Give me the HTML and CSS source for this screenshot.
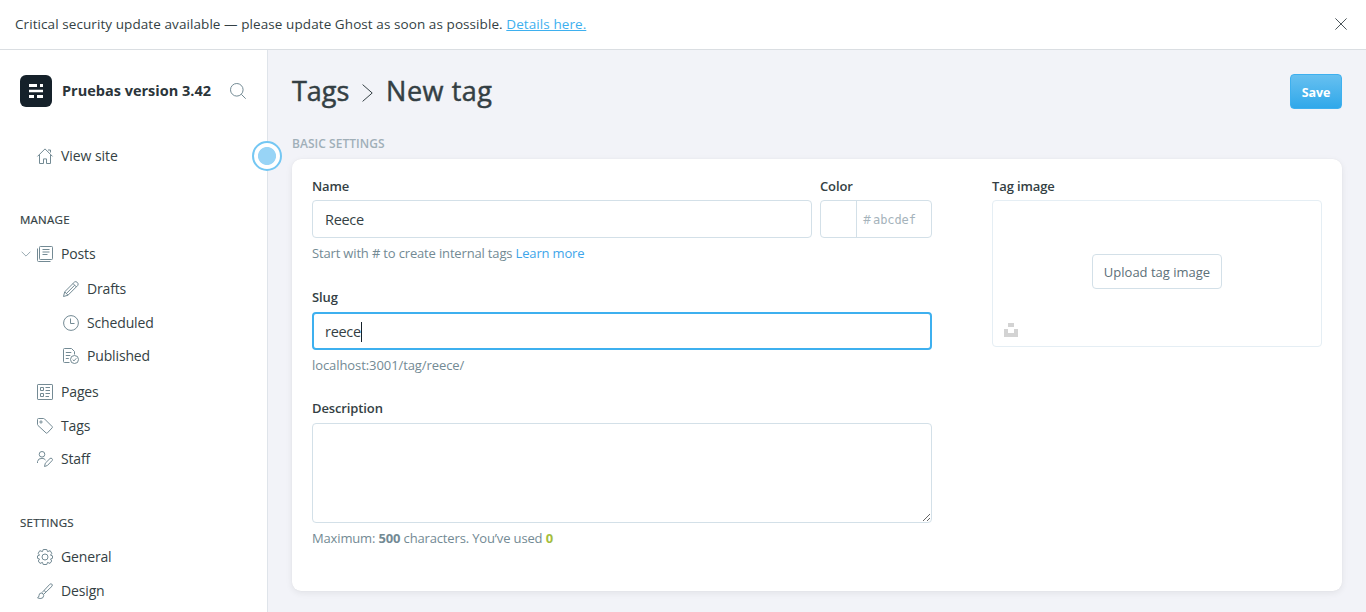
FILE: index.html
```html
<!DOCTYPE html>
<html lang="en">
<head>
<meta charset="utf-8">
<title>New tag</title>
<link rel="stylesheet" href="styles.css">
</head>
<body>
<div class="alert">
  <p class="alert-text">Critical security update available — please update Ghost as soon as possible. <a href="#">Details here.</a></p>
  <svg class="close" viewBox="0 0 12 12"><path d="M.4.4l11.2 11.2M11.6.4L.4 11.6"/></svg>
</div>
<div class="app">
  <nav class="sidebar">
    <header class="brand">
      <svg class="logo" viewBox="0 0 32 32"><rect width="32" height="32" rx="6" fill="#15212a"/><path fill="#fff" d="M9 9h8v3H9zM20 9h3v3h-3zM9 14.700h14v2.600H9zM9 20h5v3H9zM17 20h6v3h-6z"/></svg>
      <span class="brand-name">Pruebas version 3.42</span>
      <svg class="search" viewBox="0 0 16 16"><circle cx="6.800" cy="6.800" r="6.300"/><path d="M11.300 11.300l4.400 4.400"/></svg>
    </header>
    <a class="item view"><svg class="icon" viewBox="0 0 16 16"><path d="M.5 8.400L8 .9l7.500 7.500M2.500 7v8.500h4v-4.600h3v4.600h4V7M11 2h2.500v2.500"/></svg><span>View site</span></a>
    <h2 class="group">MANAGE</h2>
    <a class="item posts"><svg class="chevron" viewBox="0 0 10 6"><path d="M.6.7L5 5.100 9.400.7"/></svg><svg class="icon" viewBox="0 0 16 16"><rect x="2.500" y=".5" width="13" height="13" rx=".8"/><path d="M.5 2.500V14.500q0 1 1 1H13.500M5.500 3.500h7M5.500 6h7M5.500 8.500h5"/></svg><span>Posts</span></a>
    <a class="item sub first"><svg class="icon" viewBox="0 0 16 16"><path d="M.5 15.500l1.200-4.700L11.500 1q1.300-1 2.800.4t.5 3L5 14.200zM1.700 10.800L5 14.200M10 2.500l3.500 3.500M3.400 12.500l8.300-8.300"/></svg><span>Drafts</span></a>
    <a class="item sub"><svg class="icon" viewBox="0 0 16 16"><circle cx="8" cy="8" r="7.400"/><path d="M7.500 3.500v5h4"/></svg><span>Scheduled</span></a>
    <a class="item sub short"><svg class="icon" viewBox="0 0 16 16"><path d="M6.500 14.500h-5q-1 0-1-1v-12q0-1 1-1h7l3 3v3M2.800 4.500h5.500M2.800 7.500h4.500M2.800 10.500h3"/><circle cx="11.500" cy="11.500" r="4"/><path d="M9.700 11.600l1.300 1.300 2.300-2.600"/></svg><span>Published</span></a>
    <a class="item pages"><svg class="icon" viewBox="0 0 16 16"><rect x=".5" y=".5" width="15" height="15" rx=".6"/><path d="M3.500 3.500h3v3h-3zM3.500 9.500h3v3h-3zM8.500 3.500h4.500M8.500 6.500h4.500M8.500 9.500h4.500M8.500 12.500h3.500"/></svg><span>Pages</span></a>
    <a class="item"><svg class="icon" viewBox="0 0 16 16"><path d="M.5 1.500q0-1 1-1h5q.6 0 1 .4l7.600 7.600q.7.700 0 1.400l-4.700 5q-.7.700-1.400 0L.9 7.400Q.5 7 .5 6.500z"/><circle cx="4" cy="4" r="1.100"/></svg><span>Tags</span></a>
    <a class="item short"><svg class="icon" viewBox="0 0 16 16"><circle cx="5" cy="3.300" r="2.800"/><path d="M.5 12V10.500Q1 7.300 5 7.300q2.200 0 3.500 1.700M7.500 15.500l.8-3.300 4.700-4.700q1-.8 2 .1t.1 2l-4.700 4.900z"/></svg><span>Staff</span></a>
    <h2 class="group">SETTINGS</h2>
    <a class="item posts"><svg class="icon" viewBox="0 0 16 16"><path d="M5.500 2.600L6.200.5H9.800l.7 2.100 2.700-.9 1.600 2.600L13.500 6.200l2 .7v2.400l-2 .7 1.200 2-1.700 2.400-2.500-1-.7 2.100H6.200l-.7-2.100-2.500 1L1.300 12l1.200-2-2-.7V6.900l2-.7L1.200 4.300l1.600-2.600z" stroke-linejoin="round"/><circle cx="8" cy="8" r="3"/></svg><span>General</span></a>
    <a class="item"><svg class="icon" viewBox="0 0 16 16"><path d="M.5 14.700q1.500-.2 1.500-2.200 0-2.300 2.200-2.500 2.500.2 2.500 2.500 0 2.700-2.800 3-2 .1-3.400-.8zM5 9.600l7.800-8.300q1-.9 2-.2t.2 2.100L6.900 11.100M7 7.500l1.900 1.700"/></svg><span>Design</span></a>
    <span class="beacon"></span>
  </nav>
  <main class="main">
    <header class="head">
      <h1 class="title"><span class="crumb">Tags</span><svg class="sep" viewBox="0 0 11 18"><path d="M.6.6L10.200 9 .6 17.400"/></svg><span class="current">New tag</span></h1>
      <button class="save">Save</button>
    </header>
    <h2 class="section">BASIC SETTINGS</h2>
    <section class="card">
      <div class="fields">
        <div class="pair">
          <div class="grow">
            <label class="label">Name</label>
            <div class="input">Reece</div>
          </div>
          <div class="color">
            <label class="label">Color</label>
            <div class="input color-input"><span class="swatch"></span><span class="hash">#</span><span class="hex">abcdef</span></div>
          </div>
        </div>
        <p class="help start">Start with # to create internal tags <a>Learn more</a></p>
        <label class="label slug">Slug</label>
        <div class="input focus"><span class="slug-text">reece</span><i class="caret"></i></div>
        <p class="help url">localhost:3001/tag/reece/</p>
        <label class="label desc">Description</label>
        <textarea class="area"></textarea>
        <p class="help max">Maximum: <b>500</b> characters. You’ve used <b class="count">0</b></p>
      </div>
      <div class="image">
        <label class="label tagimg">Tag image</label>
        <div class="drop">
          <button class="upload">Upload tag image</button>
          <svg class="unsplash" viewBox="0 0 14 14"><path fill="#d3d3d3" d="M4 0h6v4H4zM0 6h4v4h6V6h4v8H0z"/></svg>
        </div>
      </div>
    </section>
  </main>
</div>
</body>
</html>
```
FILE: styles.css
```css
* { box-sizing: border-box; }
body {
  margin: 0;
  height: 612px;
  overflow: hidden;
  display: flex;
  flex-direction: column;
  font: 14px/20px "Open Sans", "Noto Sans", sans-serif;
  color: #343f44;
  background: #f2f3f8;
}
h1, h2, p { margin: 0; }
svg { flex: none; fill: none; }
.alert {
  height: 50px;
  flex: none;
  display: flex;
  align-items: center;
  justify-content: space-between;
  padding: 0 19px 1px 15px;
  background: #fff;
  border-bottom: 1px solid #dadee2;
}
.alert-text { font-size: 13.500px; letter-spacing: .080px; white-space: nowrap; }
.alert a { color: #3eb0ef; text-decoration: underline; }
.close { width: 12px; height: 12px; stroke: #4b555b; }
.app { flex: 1; display: flex; min-height: 0; }
.sidebar {
  position: relative;
  width: 268px;
  flex: none;
  padding: 25px 0 0 20px;
  background: #fff;
  border-right: 1px solid #dfe4ea;
}
.brand { display: flex; align-items: center; height: 32px; }
.logo { width: 32px; height: 32px; margin-right: 10px; }
.brand-name { width: 168px; font-size: 14.500px; font-weight: 700; color: #2b353a; white-space: nowrap; }
.search { width: 16px; height: 16px; stroke: #738a94; }
.item {
  display: flex;
  align-items: center;
  height: 34px;
  padding-left: 17px;
  position: relative;
  letter-spacing: -.150px;
}
.icon { width: 16px; height: 16px; margin-right: 8px; stroke: #738a94; overflow: visible; }
.view { margin-top: 32px; letter-spacing: -.050px; }
.group { margin-top: 38px; font-size: 11.500px; line-height: 20px; font-weight: 500; letter-spacing: .250px; -webkit-text-stroke: .2px currentColor; }
.view + .group { margin-top: 37px; }
.posts { margin-top: 7px; }
.chevron { position: absolute; left: 1px; top: 14px; width: 10px; height: 6px; stroke: #9aabb3; }
.sub { padding-left: 43px; }
.first { margin-top: 1px; }
.short { height: 32px; }
.pages { margin-top: 3px; }
.beacon {
  position: absolute;
  left: 252px;
  top: 91px;
  width: 30px;
  height: 30px;
  border: 2px solid #74c7f3;
  border-radius: 50%;
  background: radial-gradient(circle, #98d4f6 0 8.600px, #fff 9.400px);
  z-index: 2;
}
.main { flex: 1; min-width: 0; padding: 24px 24px 0; }
.head { display: flex; justify-content: space-between; align-items: flex-start; height: 35px; }
.title { display: flex; align-items: center; height: 35px; padding-bottom: 1px; font-size: 27px; line-height: 34px; font-weight: 500; color: #343f44; -webkit-text-stroke: .5px currentColor; }
.sep { width: 11px; height: 18px; margin: 3px 13px 0 13px; stroke: #343f44; }
.crumb { width: 57px; white-space: nowrap; }
.current { letter-spacing: .550px; white-space: nowrap; }
.save {
  width: 52px;
  height: 35px;
  padding: 2px 0 0;
  border: 1px solid #3eb0ef;
  border-radius: 4px;
  font: 700 12.500px/20px "Open Sans", sans-serif;
  letter-spacing: -.1px;
  color: #fff;
  background: linear-gradient(#67c0f0, #30a8ea);
}
.section { margin-top: 25px; font-size: 12px; line-height: 20px; font-weight: 600; letter-spacing: .040px; color: #a0afb8; }
.card {
  margin-top: 5px;
  height: 432px;
  display: flex;
  gap: 60px;
  padding: 17px 20px;
  border-radius: 9px;
  background: #fff;
  box-shadow: 0 0 1px rgba(0, 0, 0, .08), 0 2px 7px rgba(0, 0, 0, .07);
}
.fields { width: 620px; }
.pair { display: flex; gap: 8px; }
.grow { flex: 1; }
.color { width: 112px; }
.label { display: block; height: 20px; margin-bottom: 4px; font-size: 13px; font-weight: 600; letter-spacing: -.120px; }
.input {
  display: flex;
  align-items: center;
  height: 38px;
  padding: 1px 12px 0;
  border: 1px solid #d3e0e8;
  border-radius: 4px;
  font-size: 14.500px;
  letter-spacing: -.3px;
}
.color-input { padding: 0; color: #a5b3bb; }
.swatch { align-self: stretch; width: 36px; margin-top: -1px; border-right: 1px solid #d3e0e8; }
.swatch { margin-top: 0; }
.color-input { letter-spacing: 0; }
.hash { margin: 1px 2px 0 6px; font-size: 12.500px; }
.hex { margin-top: 1px; font: 12px/20px "DejaVu Sans Mono", monospace; letter-spacing: -.1px; }
.help { margin-top: 5px; font-size: 13px; color: #738a94; white-space: nowrap; }
.start { letter-spacing: -.160px; }
.url { letter-spacing: -.080px; }
.max { letter-spacing: -.150px; }
.help a { color: #3ea5ea; }
.slug { margin-top: 24px; margin-bottom: 5px; }
.focus { border: 2px solid #3eb0ef; padding: 1px 11px 0; }
.caret { width: 1px; height: 20px; background: #15212a; }
.desc { margin-top: 23px; margin-bottom: 5px; }
.area { display: block; width: 620px; height: 100px; border: 1px solid #d3e0e8; border-radius: 4px; outline: 0; background: #fff; }
.count { color: #a4be3c; }
.image { width: 330px; }
.drop {
  position: relative;
  display: flex;
  justify-content: center;
  height: 147px;
  padding-top: 53px;
  border: 1px solid #e5eef4;
  border-radius: 4px;
}
.upload {
  width: 130px;
  height: 35px;
  padding: 1px 0 0;
  border: 1px solid #d3e0e8;
  border-radius: 4px;
  background: #fff;
  font: 13px/20px "Open Sans", sans-serif;
  color: #5c7079;
  white-space: nowrap;
}
.unsplash { position: absolute; left: 11px; bottom: 9px; width: 14px; height: 14px; }
```
